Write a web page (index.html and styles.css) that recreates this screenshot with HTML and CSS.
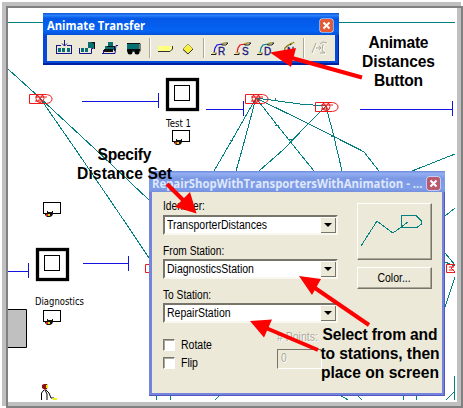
FILE: index.html
```html
<!DOCTYPE html>
<html lang="en">
<head>
<meta charset="utf-8">
<title>Animate Transfer</title>
<link rel="stylesheet" href="styles.css">
</head>
<body>
<main class="frame">
  <svg class="model" width="463" height="408" viewBox="0 0 463 408">
    <defs>
      <clipPath id="area"><rect x="8" y="8" width="447" height="392"/></clipPath>
      <g id="station"><path d="M16 .5H.5v9H16M16 .5c4 0 7 1.500 7 4.500s-3 4.500-7 4.500M6 3h12M6 7h7"/><circle cx="11" cy="4.500" r="4"/><path d="M8 1l6 7M14 1L8 8"/></g>
      <g id="machine"><rect x="1.500" y="1.500" width="30" height="30" fill="none" stroke="#000" stroke-width="3.300"/><rect x="8.500" y="7.500" width="15" height="15" fill="#fff" stroke="#000"/></g>
      <g id="desk"><rect x=".5" y=".5" width="17" height="11" fill="#fff" stroke="#000"/><path d="M2 11h2v-2h1v1h4v-1h1v3l-1 2-2 1H4l-2-2z" fill="#111"/><path d="M3 12h2v2H3z" fill="#d22"/><path d="M5 12h2v2H5z" fill="#dd2"/></g>
    </defs>
    <g clip-path="url(#area)">
      <g class="route">
        <path d="M8 22.500H455M8 69L40 98L95 149L149 200M40 98L76 150L127 225L149 258"/>
        <path d="M256 98L232 140L214 171M256 98L242 150L236 171M256 98L277 125L297 150L314 171M256 98L309 124L361 150M340 140L364 152L379 171M256 98L300 104L326 106"/>
        <path d="M326 106L308 124L283 150L259 171M326 106L334 137L342 171M412 171L455 154M445 216L455 208M445 253L455 265M445 262l10 4M445 307L455 277M454.500 400v-24"/>
        <path d="M156.500 396v4M170.500 396v4M215 400l5-5M340 395l8 5M357 395l5 5M403 395l1 5M417 395l-1 5M446 400L455 391"/>
        <path d="M230 140h3M275 125h4M272 100h3v-2M126 224l2 2M289 139h3M331 136h3"/>
      </g>
      <g class="queue">
        <path d="M82 101.500H158.500M158.500 93v15M206 109.500H243.500M243.500 101v15M360 109.500H452.500M452.500 101v15M8 271.500H28.500M28.500 263v15M83 263.500H128.500M128.500 256v15"/>
      </g>
      <g class="station">
        <use href="#station" x="29" y="94"/><use href="#station" x="245" y="94"/><use href="#station" x="315" y="102"/>
        <path d="M149 264.500h-3.500v8h3.500M455 264.500h-8.500v8h8.500M449 267h5M449 270h5M455 265l-4 3 4 4"/>
      </g>
      <use href="#machine" x="166" y="78"/><use href="#machine" x="36" y="248"/>
      <use href="#desk" x="172" y="130"/><use href="#desk" x="43" y="202"/><use href="#desk" x="43" y="310"/>
      <path d="M7 309.500H26.500V347.500H7z" fill="#c0c0c0" stroke="#000"/>
      <path d="M42 385l2-1h3l1 2-1 3-2 1-3-2z" fill="#8b1010"/><path d="M46 385h2v3h-2z" fill="#ee1"/>
      <path d="M44 390l-2.500 3v7M45 390l2 4v6M46 390l3 3 2 5h3" fill="none" stroke="#000"/><path d="M52 398h5v2h-4z" fill="#ee2"/>
    </g>
    <text class="caption" x="166" y="127" textLength="25" lengthAdjust="spacingAndGlyphs">Test 1</text>
    <text class="caption" x="35" y="305" textLength="49" lengthAdjust="spacingAndGlyphs">Diagnostics</text>
  </svg>

  <section class="window toolbar">
    <header class="titlebar"><span class="title">Animate Transfer</span><span class="close"><svg width="13" height="13" viewBox="0 0 13 13"><path d="M3.500 3.500l6 6M9.500 3.500l-6 6"/></svg></span></header>
    <div class="tools">
      <svg width="288" height="26" viewBox="0 0 288 26">
        <g fill="none" stroke="#14148c">
          <path d="M9 10.500h5M20 10.500h5M9.500 10v8M24.500 10v8M9 18.500h16M17.500 5v6M15 8.500l2.500 2.500 2.500-2.500"/>
          <path d="M32.500 13v5.500h12v-5h2"/>
          <path d="M55 18.500h13l1-8h2M56.500 18v-3"/>
        </g>
        <g fill="#087070">
          <path d="M11 13h3v4h-3zM15 13h3v4h-3zM20 13h3v4h-3zM34 13h3v4h-3zM38 13h3v4h-3zM41 7h6v6h-6zM61 7h5v4h-5zM58 11h9v4h-9zM80 8h12v9H80z"/>
        </g>
        <path d="M44 7h3v2M57 14h9v3h-9zM80 14h13v2H80z" fill="#111"/>
        <path d="M47.500 7v7M60 11.500h8M67.500 11v5M80 8.500h13v8" fill="none" stroke="#111"/>
        <circle cx="83" cy="17" r="2.500"/><circle cx="90" cy="17" r="2.500"/>
        <path class="divider" d="M102.500 3v20M156.500 3v20M256.500 3v20"/><path class="shine" d="M103.500 3v20M157.500 3v20M257.500 3v20"/>
        <path d="M111 11h12l2 1v2l-2 2h-12z" fill="#ffff80"/><path d="M111 16.500h12l2.500-2.500v-3" fill="none" stroke="#333"/>
        <path d="M141 9l5 5-5 5-5-5z" fill="#f8f040" stroke="#aaa060"/><path d="M136 14.500l5 4.500 5-5" fill="none" stroke="#333"/>
        <g fill="none" stroke-width="1.200">
          <path d="M167 18l1-5 2-3 5-1" stroke="#1010df"/><path d="M190 18l1-5 2-3 5-1" stroke="#e01010"/><path d="M213 18l1-5 2-3 5-1" stroke="#008080"/><path d="M237 18l1-5 2-2 5-3" stroke="#777700"/>
        </g>
        <g class="hooks"><path d="M164 19.500h5v-2M174 10l3-2h4l-2 2h-4M187 19.500h5v-2M197 10l3-2h4l-2 2h-4M210 19.500h5v-2M220 10l3-2h4l-2 2h-4M234 19.500h5v-2M243 10l4-3"/></g>
        <path d="M175 8h4M198 8h4M221 8h4M244 8h4M165 18h3M188 18h3M211 18h3" stroke="#ddd438"/>
        <g class="letters"><text x="171" y="20">R</text><text x="195" y="20">S</text><text x="217" y="20">D</text><text x="240" y="20">N</text></g>
        <g fill="none" stroke="#fff" transform="translate(1 1)"><path d="M265 18l4-10M269 13h5M272 11l2 2-2 2M276 9l-1 7M273 9l3-2 4 1M273 18h5l-3-2"/></g>
        <g fill="none" stroke="#aaa89a"><path d="M265 18l4-10M269 13h5M272 11l2 2-2 2M276 9l-1 7M273 9l3-2 4 1M273 18h5l-3-2"/></g>
      </svg>
    </div>
  </section>

  <section class="window dialog">
    <header class="titlebar"><span class="title">RepairShopWithTransportersWithAnimation - ...</span><span class="close"><svg width="13" height="13" viewBox="0 0 13 13"><path d="M3.500 3.500l6 6M9.500 3.500l-6 6"/></svg></span></header>
    <div class="form">
      <div class="fields">
        <label class="label"><span class="t">Identifier:</span></label>
        <div class="combo"><span class="t wide">TransporterDistances</span><i class="drop"></i></div>
        <label class="label"><span class="t">From Station:</span></label>
        <div class="combo"><span class="t wide">DiagnosticsStation</span><i class="drop"></i></div>
        <label class="label"><span class="t">To Station:</span></label>
        <div class="combo"><span class="t wide">RepairStation</span><i class="drop"></i></div>
        <div class="options">
          <div class="checks">
            <div class="check"><i class="box"></i><span class="t wide">Rotate</span></div>
            <div class="check"><i class="box"></i><span class="t wide">Flip</span></div>
          </div>
          <div class="points"><span class="t wide"># Points:</span><div class="count"><span class="t">0</span></div></div>
        </div>
      </div>
      <div class="side">
        <div class="button preview"><svg width="73" height="55" viewBox="0 0 73 55"><path d="M3 42L19 17L35 29L50 18M43.500 11.500H58L63.500 17V20L59 23.500H43.500z"/></svg></div>
        <div class="button color"><span class="t wide mid">Color...</span></div>
      </div>
    </div>
  </section>

  <svg class="notes" width="463" height="408" viewBox="0 0 463 408">
    <g class="arrows">
      <path d="M362 77.500L292 58M167 184L186 203M369 325L315 288M318 350L266 328"/>
      <path class="head" d="M270 52.500L296 48L291 67zM196.500 213.500L190 192L175 207zM299 276L321 279L312 295zM250 321L272 319.500L264 337.500z"/>
    </g>
    <g class="note">
      <text x="398.500" y="48" textLength="60">Animate</text><text x="398.500" y="67" textLength="73">Distances</text><text x="398.500" y="86" textLength="49">Button</text>
      <text x="124.500" y="160" textLength="54">Specify</text><text x="124.500" y="179" textLength="95">Distance Set</text>
      <text x="380" y="340" textLength="115">Select from and</text><text x="380" y="359" textLength="119">to stations, then</text><text x="380" y="378" textLength="118">place on screen</text>
    </g>
  </svg>
</main>
</body>
</html>
```
FILE: styles.css
```css
* { box-sizing: border-box; }
body { margin: 0; background: #fff; overflow: hidden; font-family: "Liberation Sans", sans-serif; }
.frame { position: relative; width: 463px; height: 408px; background: #fff; overflow: hidden; }
.frame::before, .frame::after { content: ""; position: absolute; }
.frame::before { inset: 2px 2px 2px 2px; border: 4px solid #c0c0c0; }
.frame::after { left: 6px; top: 6px; right: 0; bottom: 0; border: 2px solid #808080; box-shadow: inset -4px -4px #c0c0c0; }
.model, .notes { position: absolute; left: 0; top: 0; display: block; }
.notes { z-index: 3; }
.route { fill: none; stroke: #008080; shape-rendering: crispEdges; }
.queue { fill: none; stroke: #1414e0; }
.station { fill: none; stroke: #f01818; }
.caption { font: 11px "DejaVu Sans", sans-serif; fill: #000; }

.window { position: absolute; z-index: 1; display: flex; flex-direction: column; }
.titlebar { display: flex; align-items: center; justify-content: space-between; flex: none; white-space: nowrap; }
.title { color: #fff; font: bold 12px "Open Sans", sans-serif; transform-origin: left center; }
.close { width: 13px; height: 13px; flex: none; border-radius: 2px; background: #e35a35; box-shadow: 0 0 0 .5px #fff; }
.close svg { display: block; fill: none; stroke: #fff; stroke-width: 2; }

.toolbar { left: 43px; top: 13px; width: 296px; height: 52px; padding: 0 4px 4px; background: #0648d8; box-shadow: inset 0 -2px #0020a0, inset -1px 0 #0020a0; }
.toolbar .titlebar { height: 22px; margin: 0 -4px; padding: 3px 6px 0 4px; background: linear-gradient(#0a50d0, #2e82fa 10%, #0458e6 25%, #0564f4 80%, #0450d8); }
.toolbar .title { transform: scaleX(.935); }
.tools { height: 26px; background: #ece9d8; }
.tools svg { display: block; }
.divider { stroke: #aca899; }
.shine { stroke: #fff; }
.hooks { fill: none; stroke: #222; }
.letters { font: 10px "Liberation Sans", sans-serif; fill: #161680; stroke: #161680; stroke-width: .3; }

.dialog { left: 149px; top: 171px; width: 296px; height: 225px; padding: 0 3px 3px; background: #7484dc; box-shadow: inset -1px -1px #5558c0; }
.dialog .titlebar { height: 21px; margin: 0 -3px; padding: 3px 5px 0 3px; background: linear-gradient(#6c8ade, #93aef0 12%, #7b98e4 35%, #7f9ee9 85%, #7690dc); }
.dialog .title { color: #dfe7fb; width: 269px; transform: scaleX(.945); }
.dialog .close { background: #b95a70; }
.form { flex: 1; display: flex; justify-content: space-between; padding: 11px 10px 0 11px; background: #ece9d8; }
.fields { width: 175px; }
.t { display: inline-block; font-size: 12px; line-height: 14px; white-space: nowrap; transform: scaleX(.85); transform-origin: left center; }
.wide { transform: scaleX(.875); }
.mid { transform-origin: center; }
.label { display: block; height: 12px; margin-top: 12px; line-height: 0; }
.label:first-child { margin-top: -1px; height: 13px; }
.label .t { position: relative; top: -3px; }
.combo { display: flex; justify-content: space-between; align-items: center; height: 20px; padding-left: 2px; border: 2px solid; border-color: #77756a #f8f7f0 #f8f7f0 #77756a; background: #fff; }
.drop { width: 16px; height: 16px; display: flex; align-items: center; justify-content: center; background: #ece9d8; box-shadow: inset 1px 1px #fff, inset -1px -1px #77756a; }
.drop::before { content: ""; border: 4px solid transparent; border-top-color: #000; border-bottom: 0; }
.options { display: flex; justify-content: space-between; padding-top: 15px; }
.checks { display: flex; flex-direction: column; gap: 5px; }
.check { display: flex; align-items: center; gap: 6px; height: 13px; }
.box { width: 12px; height: 12px; background: #fff; border: 1px solid; border-color: #77756a #fff #fff #77756a; box-shadow: inset 1px 1px #aaa89a; }
.points { width: 61px; margin-top: -8px; color: #aaa89a; text-shadow: 1px 1px #fff; }
.points > .t { display: block; }
.count { width: 45px; height: 20px; margin-top: 5px; padding: 1px 3px; border: 1px solid; border-color: #77756a #fff #fff #77756a; line-height: 0; }
.side { display: flex; flex-direction: column; gap: 7px; width: 75px; }
.button { display: flex; align-items: center; justify-content: center; border: 1px solid; border-color: #fff #77756a #77756a #fff; box-shadow: inset -1px -1px #aca899; }
.preview { height: 57px; }
.preview svg { fill: none; stroke: #008080; shape-rendering: crispEdges; }
.color { height: 22px; }

.arrows { fill: none; stroke: #fe0000; stroke-width: 4; }
.arrows .head { fill: #fe0000; stroke: none; }
.note { font: bold 15.600px "Liberation Sans", sans-serif; fill: #000; text-anchor: middle; }
```
